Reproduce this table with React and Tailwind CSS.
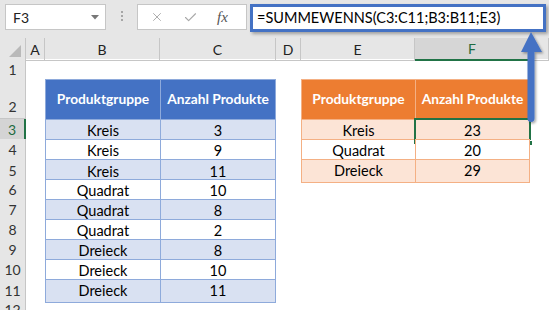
import { Check, X } from "lucide-react";

const COLS = ["A", "B", "C", "D", "E", "F", ""];

const products = [
    ["Kreis", 3],
    ["Kreis", 9],
    ["Kreis", 11],
    ["Quadrat", 10],
    ["Quadrat", 8],
    ["Quadrat", 2],
    ["Dreieck", 8],
    ["Dreieck", 10],
    ["Dreieck", 11],
];

const totals = [
    ["Kreis", 23],
    ["Quadrat", 20],
    ["Dreieck", 29],
];

const gridCols =
    "grid grid-cols-[26px_19px_115px_116px_25px_114px_115px_1fr]";

function Toolbar() {
    return (
        <div className="flex h-[38px] items-start bg-[#e6e6e6] pt-[4px] pl-[5px]">
            <div className="relative flex h-[26px] w-[101px] items-center border border-[#c6c6c6] bg-white pl-[7px] text-[14px] text-[#222]">
                F3
                <svg className="absolute right-[6px] top-[10px]" width="8" height="5" viewBox="0 0 8 5">
                    <path d="M0 0h8L4 4.5z" fill="#777" />
                </svg>
            </div>
            <div className="flex w-[31px] flex-col items-center gap-[2px] pt-[7px]">
                <span className="h-[2px] w-[2px] bg-[#a6a6a6]" />
                <span className="h-[2px] w-[2px] bg-[#a6a6a6]" />
                <span className="h-[2px] w-[2px] bg-[#a6a6a6]" />
            </div>
            <div className="flex h-[26px] w-[110px] items-center border border-[#c6c6c6] bg-white">
                <X className="ml-[12px] h-[14px] w-[14px] text-[#a8a8a8]" strokeWidth={1.6} />
                <Check className="ml-[19px] h-[15px] w-[15px] text-[#a8a8a8]" strokeWidth={1.8} />
                <span className="ml-[19px] font-['Liberation_Serif',serif] text-[15px] italic text-[#555]">
                    fx
                </span>
            </div>
            <div className="ml-[3px] flex h-[28px] w-[296px] items-center border-[3px] border-[#4472c4] bg-white pl-[4px] text-[14.5px] text-black shadow-[2px_2px_3px_rgba(0,0,0,0.3)]">
                =SUMMEWENNS(C3:C11;B3:B11;E3)
            </div>
        </div>
    );
}

function ColumnHeader() {
    return (
        <div className={`${gridCols} h-[21px] bg-[#e6e6e6] text-[14px] text-[#222]`}>
            <div className="flex items-end justify-end border-r border-b border-[#c6c6c6] pr-[4px] pb-[3px]">
                <svg width="12" height="12" viewBox="0 0 12 12">
                    <path d="M12 0V12H0z" fill="#b9b9b9" />
                </svg>
            </div>
            {COLS.map((c, i) => (
                <div
                    key={i}
                    className={
                        c === "F"
                            ? "flex items-center justify-center border-r border-b-2 border-r-[#c6c6c6] border-b-[#217346] bg-[#d6d6d6] text-[#1e6b40]"
                            : "flex items-center justify-center border-r border-b border-[#c6c6c6]"
                    }
                >
                    {c}
                </div>
            ))}
        </div>
    );
}

function RowHeader({ n, active, tall }) {
    return (
        <div
            className={
                (active
                    ? "border-r-2 border-r-[#217346] bg-[#d4d4d4] text-[#1e6b40] "
                    : "border-r border-r-[#c6c6c6] bg-[#e6e6e6] text-[#333] ") +
                "flex justify-center border-b border-b-[#c6c6c6] text-[14px] " +
                (tall ? "items-end pb-[1px]" : "items-center")
            }
        >
            {n}
        </div>
    );
}

function Cell({ children, className = "" }) {
    return (
        <div className={`flex items-center justify-center ${className}`}>
            {children}
        </div>
    );
}

function SheetRow({ n, height, left, right, active }) {
    const [b, c] = left || [];
    const [e, f] = right || [];
    return (
        <div className={`${gridCols} ${height}`}>
            <RowHeader n={n} active={active} tall={n === 2} />
            <div />
            {b ?? <div />}
            {c ?? <div />}
            <div />
            {e ?? <div />}
            {f ?? <div />}
            <div />
        </div>
    );
}

const body = "text-[14.5px]";
const head = "text-[13.75px] font-bold text-white";

function blueRow(row, i, last) {
    const band = i % 2 === 0 ? "bg-[#d9e1f2]" : "bg-white";
    const edge = "border-t border-[#8eaadb]" + (last ? " border-b" : "");
    return [
        <Cell key="b" className={`${body} ${band} ${edge} border-l`}>{row[0]}</Cell>,
        <Cell key="c" className={`${body} ${band} ${edge} border-l border-r`}>{row[1]}</Cell>,
    ];
}

function orangeRow(row, i, last) {
    const band = i % 2 === 0 ? "bg-[#fce4d6]" : "bg-white";
    const edge = "border-t border-[#f4b084]" + (last ? " border-b" : "");
    const selected = i === 0;
    return [
        <Cell key="e" className={`${body} ${band} ${edge} border-l`}>{row[0]}</Cell>,
        <Cell key="f" className={`relative ${body} ${band} ${edge} border-l border-r`}>
            {row[1]}
            {selected && (
                <div className="absolute -top-[2px] -left-[2px] -right-[2px] -bottom-[2px] border-2 border-[#217346]">
                    <span className="absolute -right-[4px] -bottom-[4px] h-[6px] w-[6px] border border-white bg-[#217346]" />
                </div>
            )}
        </Cell>,
    ];
}

function ArrowUp() {
    return (
        <svg
            className="absolute left-[518px] top-[30px]"
            width="30"
            height="96"
            viewBox="0 0 30 96"
        >
            <defs>
                <filter id="arrowShadow" x="-30%" y="-10%" width="160%" height="130%">
                    <feDropShadow dx="1.5" dy="1.5" stdDeviation="1.2" floodColor="#000" floodOpacity="0.35" />
                </filter>
            </defs>
            <path
                d="M13 2L24 22H16.5V88.5a3 3 0 0 1-7 0V22H3z"
                fill="#4472c4"
                filter="url(#arrowShadow)"
            />
        </svg>
    );
}

export default function App() {
    return (
        <div className="relative h-[310px] w-[549px] overflow-hidden bg-white font-['Lato',sans-serif] text-black">
            <Toolbar />
            <ColumnHeader />
            <SheetRow n={1} height="h-[20px]" />
            <SheetRow
                n={2}
                height="h-[40px]"
                left={[
                    <Cell key="b" className={`${head} border-t border-l border-[#8eaadb] bg-[#4472c4]`}>Produktgruppe</Cell>,
                    <Cell key="c" className={`${head} border-t border-l border-r border-[#8eaadb] bg-[#4472c4]`}>Anzahl Produkte</Cell>,
                ]}
                right={[
                    <Cell key="e" className={`${head} border-t border-l border-[#f4b084] bg-[#ed7d31]`}>Produktgruppe</Cell>,
                    <Cell key="f" className={`${head} border-t border-l border-r border-[#f4b084] bg-[#ed7d31]`}>Anzahl Produkte</Cell>,
                ]}
            />
            {products.map((row, i) => (
                <SheetRow
                    key={i}
                    n={i + 3}
                    height="h-[20px]"
                    active={i === 0}
                    left={blueRow(row, i, i === products.length - 1)}
                    right={i < totals.length ? orangeRow(totals[i], i, i === totals.length - 1) : null}
                />
            ))}
            <SheetRow n={12} height="h-[20px]" />
            <ArrowUp />
        </div>
    );
}
